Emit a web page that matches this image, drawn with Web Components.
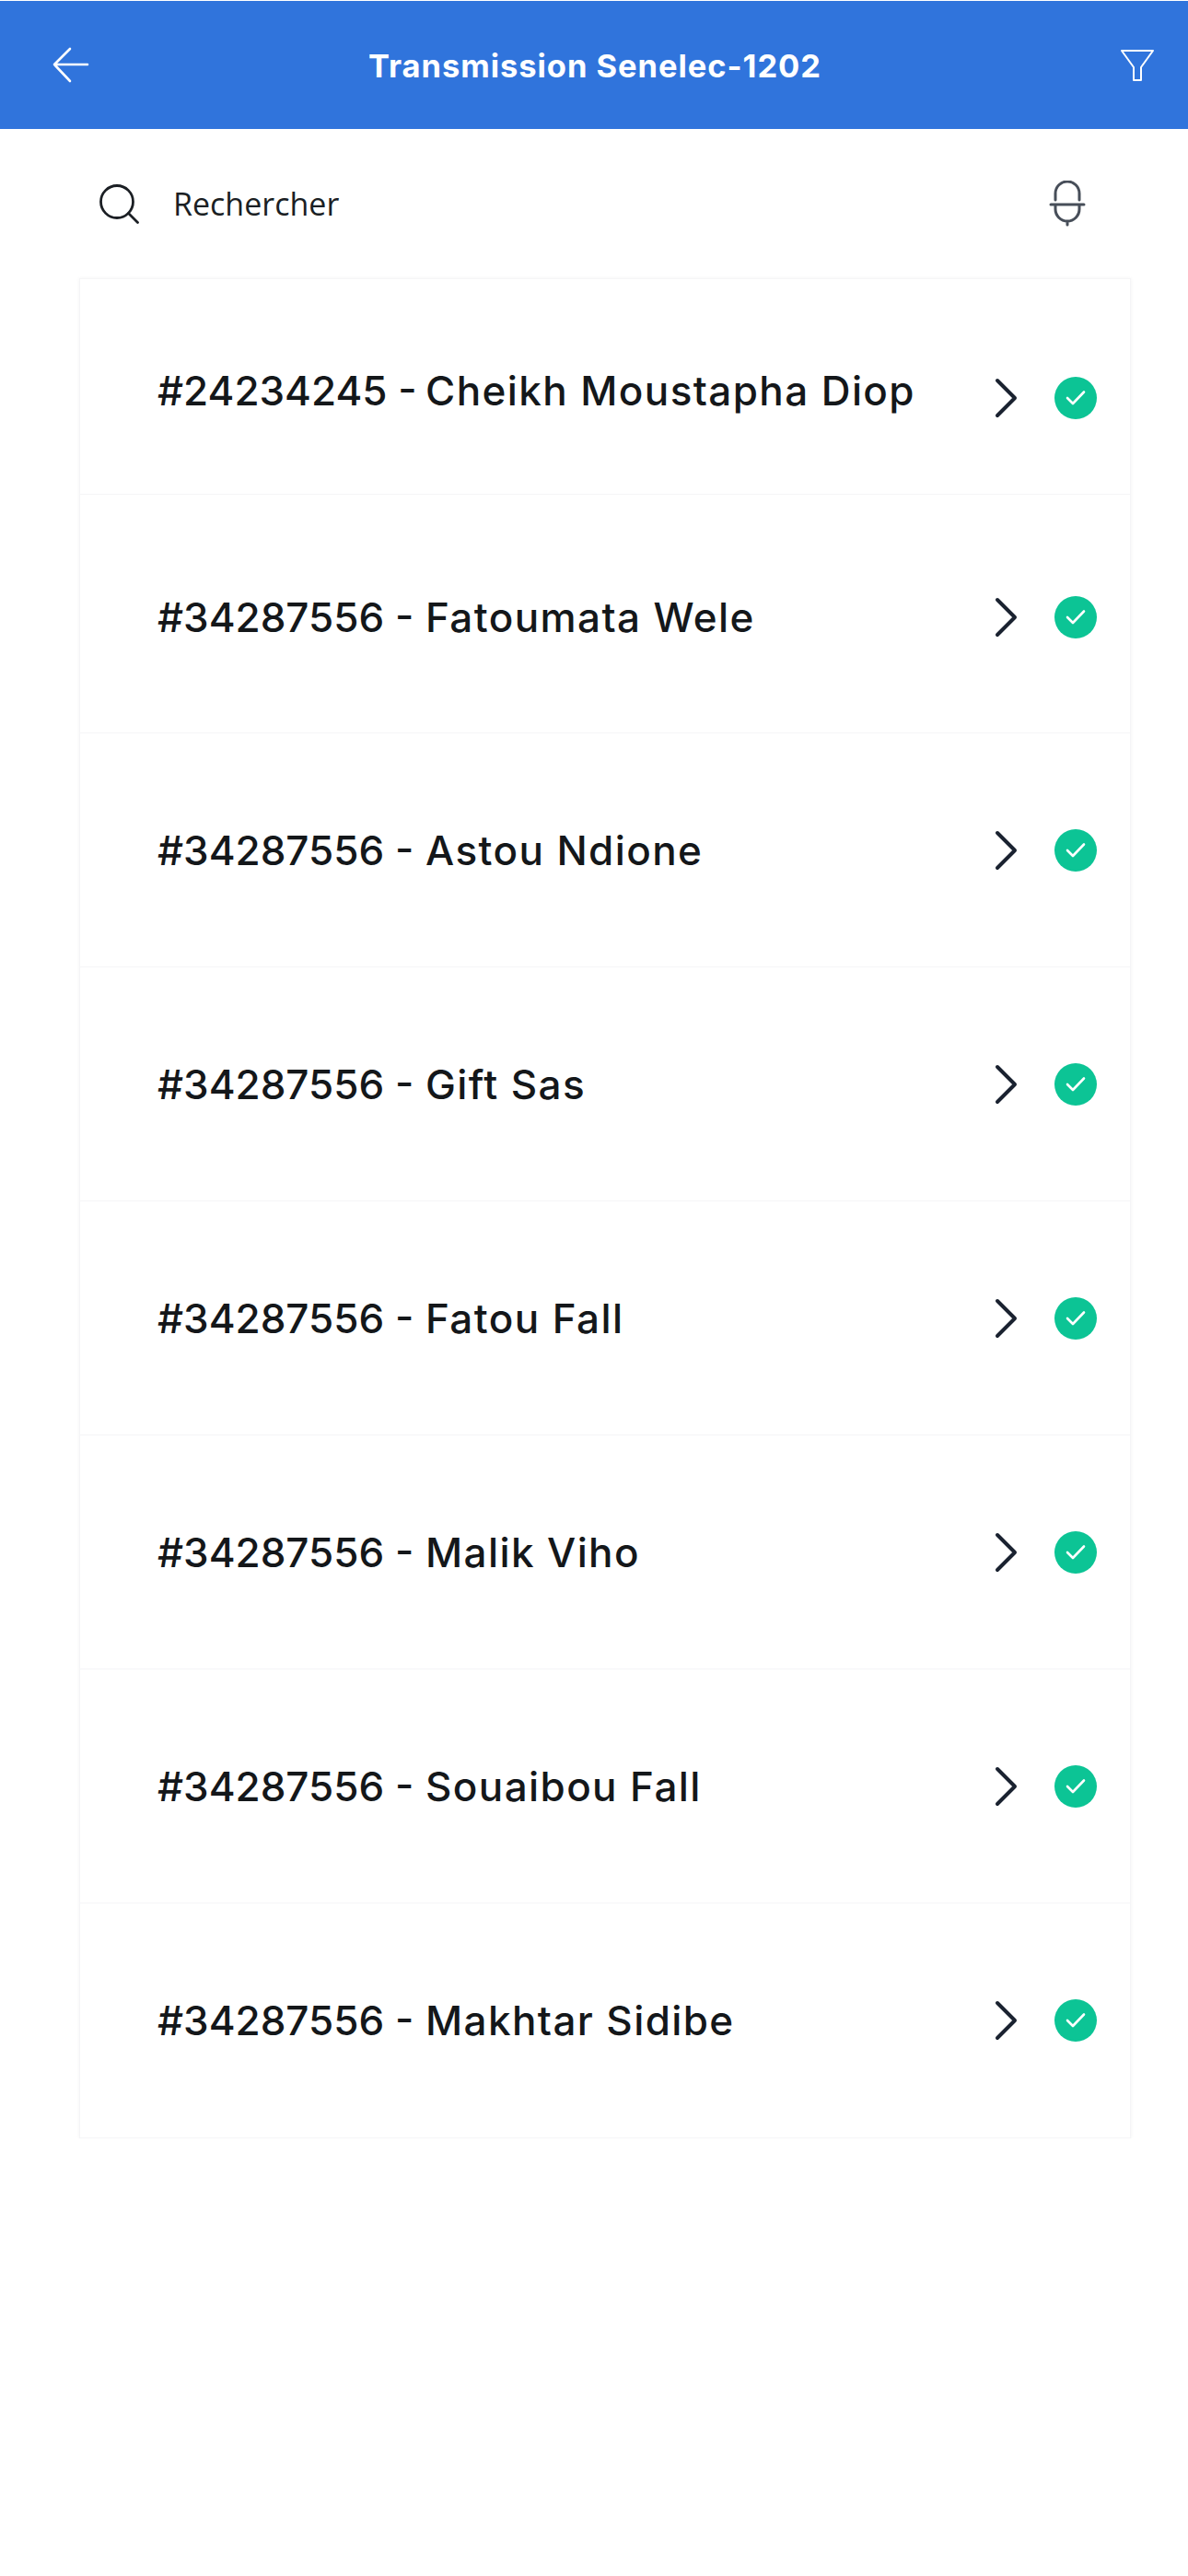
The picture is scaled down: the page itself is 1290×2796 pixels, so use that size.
<!DOCTYPE html>
<html lang="fr">
<head>
<meta charset="utf-8">
<title>Transmission Senelec-1202</title>
<style>
  html, body { margin: 0; background: #fff; }
  body { font-family: "Open Sans", sans-serif; }
</style>
</head>
<body>
<app-bar>Transmission Senelec-1202</app-bar>
<search-bar>Rechercher</search-bar>
<transmission-list>
  <transmission-row num="#24234245" height="234" offset="24" lift="16">Cheikh Moustapha Diop</transmission-row>
  <transmission-row num="#34287556" height="259" offset="7">Fatoumata Wele</transmission-row>
  <transmission-row num="#34287556">Astou Ndione</transmission-row>
  <transmission-row num="#34287556">Gift Sas</transmission-row>
  <transmission-row num="#34287556">Fatou Fall</transmission-row>
  <transmission-row num="#34287556">Malik Viho</transmission-row>
  <transmission-row num="#34287556">Souaibou Fall</transmission-row>
  <transmission-row num="#34287556">Makhtar Sidibe</transmission-row>
</transmission-list>

<script>
class AppBar extends HTMLElement {
	constructor() {
		super();
		this.attachShadow({ mode: 'open' });
	}

	connectedCallback() {
		this.shadowRoot.innerHTML = /* html */ `
      <style>
        :host {
          display: grid;
          grid-template-columns: 1fr auto 1fr;
          align-items: center;
          box-sizing: border-box;
          height: 139px;
          margin-top: 1px;
          padding: 0 37px;
          background: #3074dc;
          color: #fff;
        }
        .title {
          font: 700 34.5px "Inter", sans-serif;
          letter-spacing: 0.95px;
          white-space: nowrap;
          margin: 2px 0 0 2px;
        }
        svg { display: block; fill: none; stroke: #fff; stroke-linecap: round; stroke-linejoin: round; }
        .back { margin-left: 20px; }
        .filter { justify-self: end; }
      </style>
      <svg class="back" width="40" height="40" viewBox="0 0 40 40" stroke-width="2.6">
        <path d="M2 19h36M19 2 2 19l17 18"/>
      </svg>
      <div class="title"><slot></slot></div>
      <svg class="filter" width="36" height="34" viewBox="0 0 36 34" stroke-width="2">
        <path d="M1 1h34L22 19v14h-8V19z"/>
      </svg>
    `;
	}
}

class SearchBar extends HTMLElement {
	constructor() {
		super();
		this.attachShadow({ mode: 'open' });
	}

	connectedCallback() {
		this.shadowRoot.innerHTML = /* html */ `
      <style>
        :host {
          display: flex;
          align-items: center;
          box-sizing: border-box;
          height: 162px;
          padding: 0 111px 0 108px;
          color: #1b1f24;
        }
        .label {
          flex: 1;
          margin-left: 37px;
          font: 400 34px "Open Sans", sans-serif;
        }
        svg { display: block; fill: none; stroke-linecap: round; stroke-linejoin: round; }
      </style>
      <svg width="43" height="43" viewBox="0 0 43 43" stroke="#1b1f24" stroke-width="2.8">
        <circle cx="19" cy="19" r="17.5"/>
        <path d="m31.5 31.5 10 10"/>
      </svg>
      <div class="label"><slot></slot></div>
      <svg width="40" height="50" viewBox="0 0 40 50" stroke="#474e59" stroke-width="3">
        <path d="M7 21V14a13 13 0 0 1 26 0v7M2 26h36M7 26v5a13 13 0 0 0 26 0v-5M20 44v4"/>
      </svg>
    `;
	}
}

class TransmissionList extends HTMLElement {
	constructor() {
		super();
		this.attachShadow({ mode: 'open' });
	}

	connectedCallback() {
		this.shadowRoot.innerHTML = /* html */ `
      <style>
        :host {
          display: block;
          box-sizing: border-box;
          width: 1142px;
          margin-left: 86px;
          background: #fff;
          border: 1px solid #f5f5f7;
          box-shadow: 0 0 4px rgba(0, 0, 0, 0.05);
        }
        ::slotted(transmission-row:last-child) { border-bottom: 0; }
      </style>
      <slot></slot>
    `;
	}
}

class TransmissionRow extends HTMLElement {
	constructor() {
		super();
		this.attachShadow({ mode: 'open' });
	}

	connectedCallback() {
		const num = this.getAttribute('num') || '';
		const height = this.getAttribute('height') || '254';
		const offset = this.getAttribute('offset') || '0';
		const lift = this.getAttribute('lift') || '0';
		this.shadowRoot.innerHTML = /* html */ `
      <style>
        :host {
          display: flex;
          align-items: center;
          box-sizing: border-box;
          height: ${height}px;
          padding: ${offset}px 36px 0 84px;
          border-bottom: 1px solid #f5f5f7;
          color: #14171a;
        }
        .name {
          flex: 1;
          margin-bottom: ${lift}px;
          font: 500 44px "Inter", sans-serif;
          letter-spacing: 1.4px;
          white-space: nowrap;
        }
        .num {
          display: inline-block;
          width: 291px;
          letter-spacing: 0;
        }
        svg { display: block; }
      </style>
      <div class="name"><span class="num">${num} - </span><slot></slot></div>
      <svg width="26" height="44" viewBox="0 0 26 44" fill="none" stroke="#1a2230" stroke-width="4" stroke-linecap="round" stroke-linejoin="round">
        <path d="M3 3l19 19L3 41"/>
      </svg>
      <svg style="margin-left:39px" width="46" height="46" viewBox="0 0 46 46">
        <circle cx="23" cy="23" r="23" fill="#0cc495"/>
        <path d="M14 23l6 6 12-12.5" fill="none" stroke="#fff" stroke-width="2.6" stroke-linecap="round" stroke-linejoin="round"/>
      </svg>
    `;
	}
}

customElements.define('app-bar', AppBar);
customElements.define('search-bar', SearchBar);
customElements.define('transmission-list', TransmissionList);
customElements.define('transmission-row', TransmissionRow);
</script>
</body>
</html>
